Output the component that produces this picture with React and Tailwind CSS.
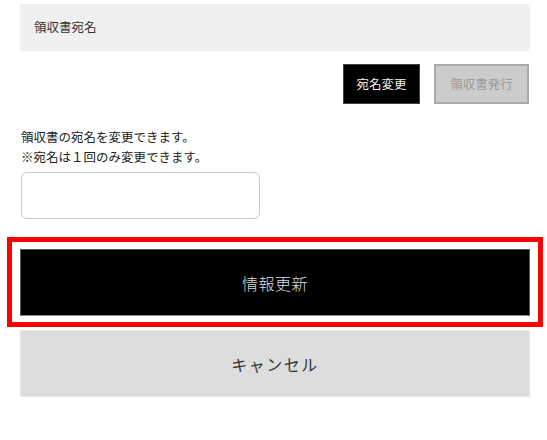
import React from 'react';

const jp = { fontFamily: '"Noto Sans CJK JP", "Noto Sans", sans-serif' };

export default function App() {
  return (
    <div className="w-[547px] h-[440px] bg-white pt-[4px]" style={jp}>
      <div className="ml-[20px] w-[510px]">
        {/* Section header */}
        <div className="h-[47px] bg-[#f0f0f0] flex items-center pl-[14px] text-[12.5px] text-[#333]">
          領収書宛名
        </div>

        {/* Action buttons */}
        <div className="mt-[13px] flex justify-end gap-[14px] pr-[1px]">
          <button className="h-[40px] w-[77px] bg-black border border-[#444] text-[12.5px] text-[#f0f0f0] leading-none">
            宛名変更
          </button>
          <button
            disabled
            className="h-[40px] w-[95px] bg-[#cccccc] border-2 border-[#aaaaaa] text-[12.5px] text-[#999] leading-none"
          >
            領収書発行
          </button>
        </div>

        {/* Note */}
        <div className="mt-[23px] text-[12.5px] leading-[20px] text-[#222]">
          <p className="pl-[1px]">領収書の宛名を変更できます。</p>
          <p className="pl-[1px]">※宛名は１回のみ変更できます。</p>
        </div>

        <input
          type="text"
          className="mt-[5px] block ml-[1px] w-[239px] h-[47px] rounded-[6px] border border-[#cccccc] bg-white outline-none"
        />

        {/* Submit */}
        <div className="relative mt-[30px]">
          <button className="w-full h-[67px] bg-black border border-[#555] border-b-[#888] text-[16px] font-light text-[#dddddd] tracking-[0.5px]">
            情報更新
          </button>
          <div className="absolute -left-[13px] -top-[12px] w-[536px] h-[90px] border-[5px] border-[#ff0000] pointer-events-none" />
        </div>

        <button className="mt-[14px] block w-full h-[67px] bg-[#dddddd] border border-[#e6e6e6] text-[16px] text-[#333] tracking-[1.5px]">
          キャンセル
        </button>
      </div>
    </div>
  );
}
